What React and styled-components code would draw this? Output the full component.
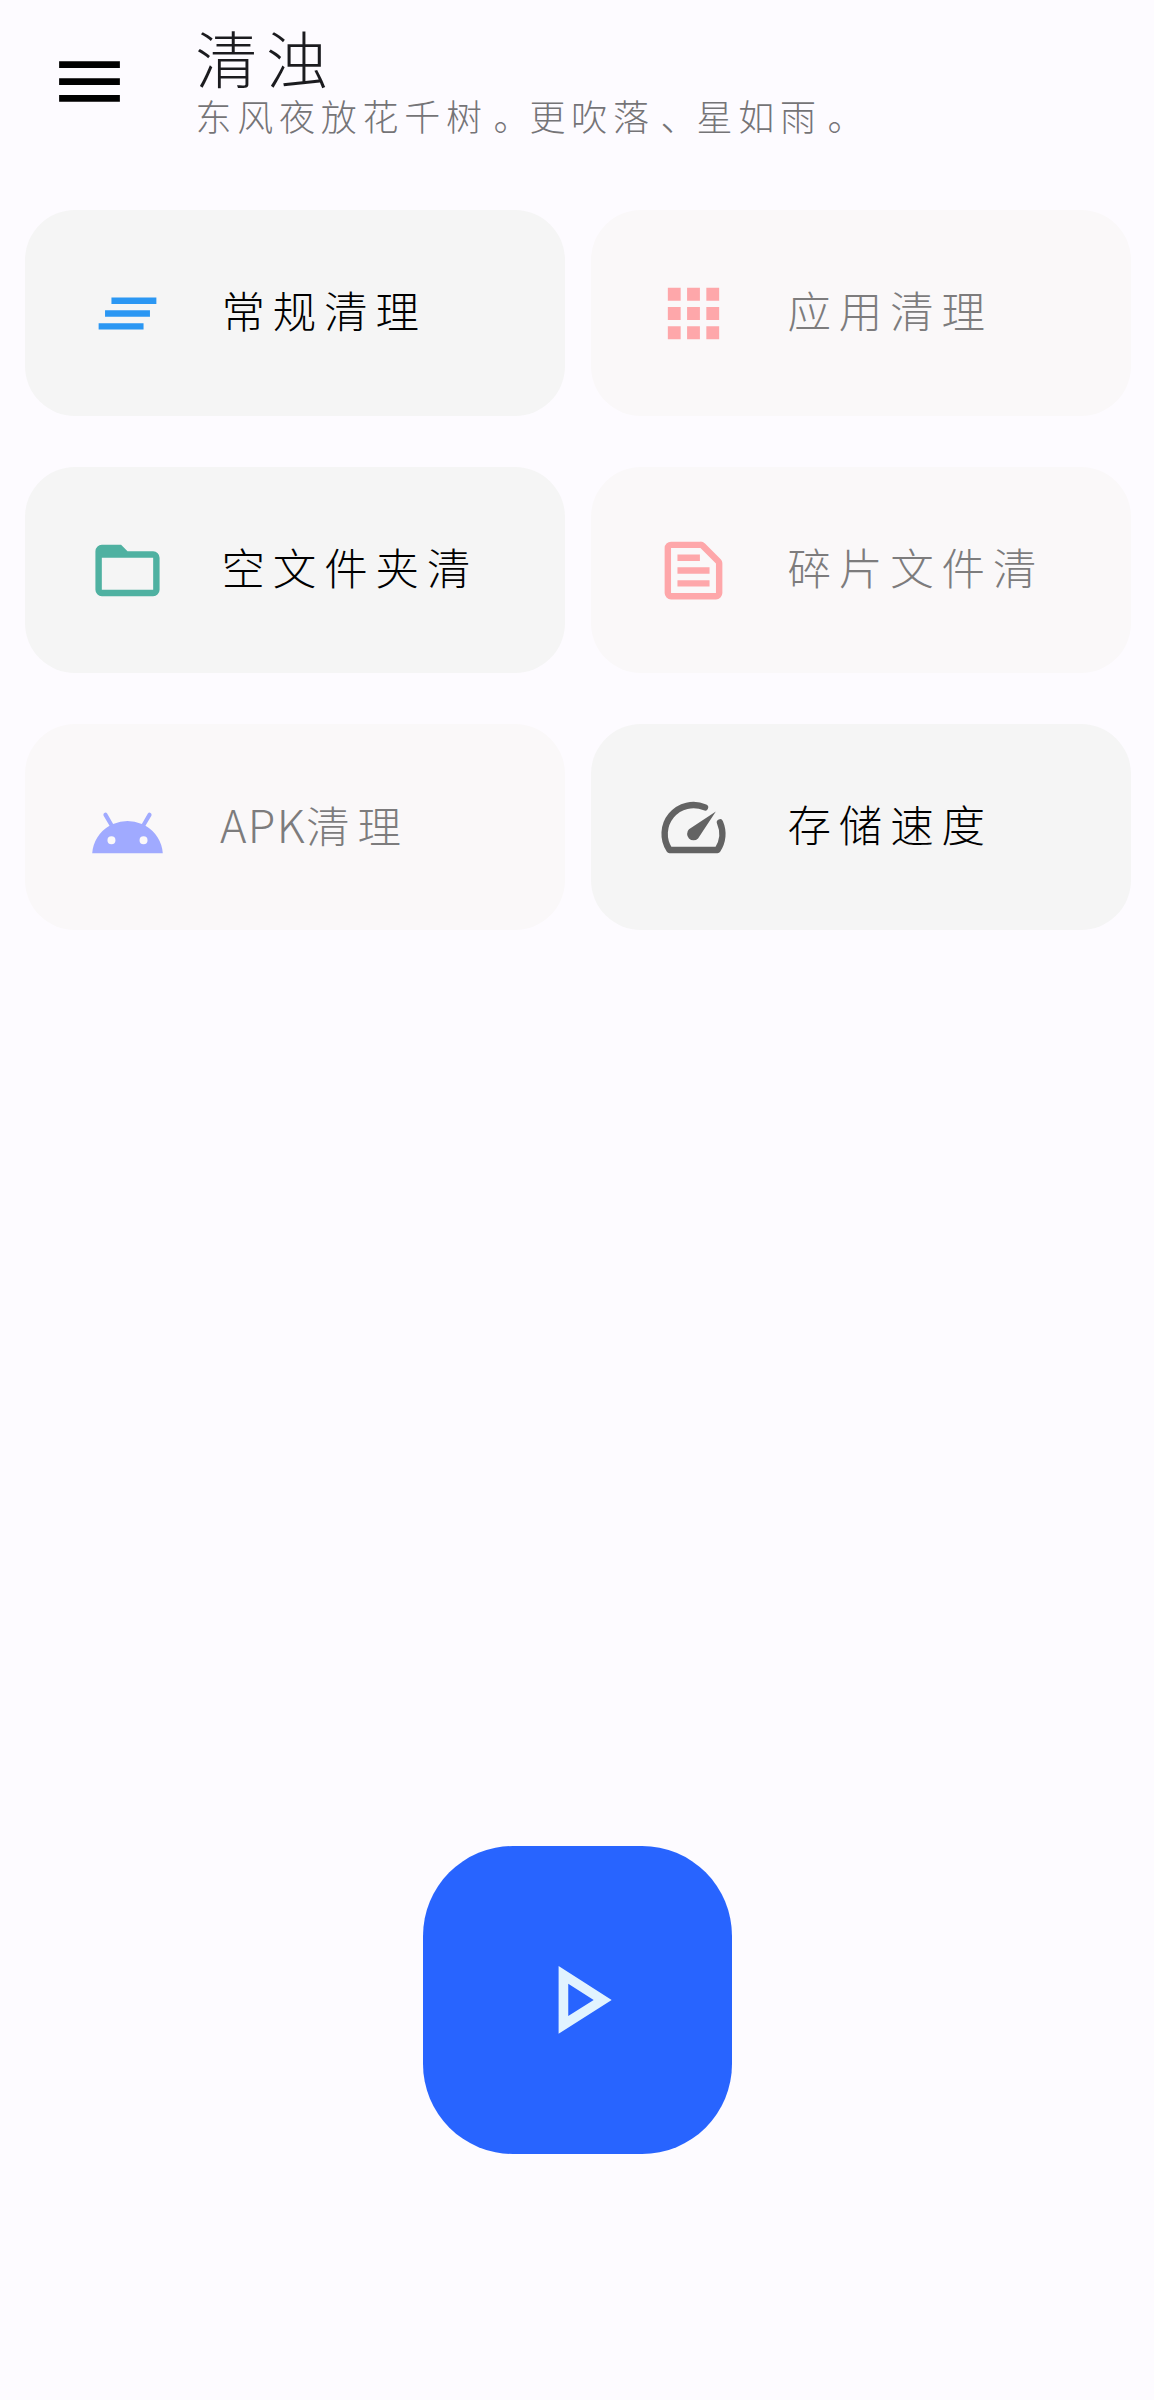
import React from "react";
import styled, { createGlobalStyle } from "styled-components";

const GlobalStyle = createGlobalStyle`
  *, *::before, *::after { box-sizing: border-box; }
  body {
    margin: 0;
    background: #fdfbff;
    font-family: "Liberation Sans", "Noto Sans CJK SC", sans-serif;
    font-weight: 300;
  }
`;

const Screen = styled.main`
  display: flex;
  flex-direction: column;
  width: 1154px;
  height: 2400px;
  overflow: hidden;
  background: #fdfbff;
`;

const Header = styled.header`
  display: flex;
  align-items: flex-start;
  height: 210.4px;
  padding: 26px 49px 0;
`;

const MenuButton = styled.button`
  display: flex;
  flex: none;
  width: 81px;
  height: 81px;
  margin-top: 14.5px;
  padding: 0;
  border: 0;
  background: none;
  color: #000;
`;

const Titles = styled.div`
  display: flex;
  flex-direction: column;
  margin-left: 65.5px;
`;

const Title = styled.h1`
  margin: 3px 0 0;
  font-size: 62px;
  font-weight: 300;
  line-height: 68px;
  letter-spacing: 8.5px;
  color: #1b1b1f;
  white-space: nowrap;
`;

const Subtitle = styled.p`
  margin: 1px 0 0;
  font-size: 36px;
  line-height: 42px;
  letter-spacing: 5.75px;
  color: #757477;
  white-space: nowrap;
`;

const Punctuation = styled.span`
  padding-left: 5.75px;
  letter-spacing: 0;
`;

const Grid = styled.section`
  display: grid;
  grid-template-columns: 540px 540px;
  grid-auto-rows: 205.6px;
  column-gap: 26px;
  row-gap: 51.4px;
  padding-left: 25px;
`;

const Card = styled.button`
  display: flex;
  align-items: center;
  padding: 0 0 0 64.4px;
  border: 0;
  border-radius: 50px;
  background: ${(p) => (p.$dim ? "#faf8f9" : "#f5f5f5")};
  color: ${(p) => (p.$dim ? "#7d7c7d" : "#000")};
  font-family: inherit;
  text-align: left;
`;

const CardIcon = styled.span`
  display: flex;
  flex: none;
  width: 77px;
  height: 77px;
  margin-right: 55px;
  color: ${(p) => p.$color};
`;

const Label = styled.span`
  font-size: 43.5px;
  font-weight: 300;
  line-height: 50px;
  letter-spacing: 7.9px;
  white-space: nowrap;
`;

const Latin = styled.span`
  margin-left: -1.5px;
  font-family: "Noto Sans CJK SC", "Noto Sans", sans-serif;
  font-size: 45px;
  line-height: 1;
  letter-spacing: 1.4px;
`;

const StartButton = styled.button`
  display: flex;
  align-items: center;
  justify-content: center;
  align-self: center;
  width: 308.4px;
  height: 308.4px;
  margin: 915.6px 0 0 1px;
  padding: 0;
  border: 0;
  border-radius: 90px;
  background: #2864ff;
  color: #e1f3ff;
`;

const Svg = styled.svg`
  display: block;
  width: ${(p) => p.$size || "100%"};
  height: ${(p) => p.$size || "100%"};
  fill: currentColor;
`;

const Icon = ({ size, children }) => (
  <Svg viewBox="0 0 24 24" $size={size} aria-hidden="true">
    {children}
  </Svg>
);

const MenuIcon = () => (
  <Icon>
    <path d="M3 18h18v-2H3v2zm0-5h18v-2H3v2zm0-7v2h18V6H3z" />
  </Icon>
);

const ClearAllIcon = () => (
  <Icon>
    <path d="M5 13h14v-2H5v2zm-2 4h14v-2H3v2zM7 7v2h14V7H7z" />
  </Icon>
);

const AppsIcon = () => (
  <Icon>
    <path d="M4 8h4V4H4v4zm6 12h4v-4h-4v4zm-6 0h4v-4H4v4zm0-6h4v-4H4v4zm6 0h4v-4h-4v4zm6-10v4h4V4h-4zm-6 4h4V4h-4v4zm6 6h4v-4h-4v4zm0 6h4v-4h-4v4z" />
  </Icon>
);

const FolderIcon = () => (
  <Icon>
    <path d="M20 18H4V8h16m0-2h-8l-2-2H4a2 2 0 0 0-2 2v12a2 2 0 0 0 2 2h16a2 2 0 0 0 2-2V8a2 2 0 0 0-2-2z" />
  </Icon>
);

const SnippetIcon = () => (
  <Icon>
    <path
      fillRule="evenodd"
      d="M20.41 8.41l-4.83-4.83A2 2 0 0 0 14.17 3H5a2 2 0 0 0-2 2v14a2 2 0 0 0 2 2h14a2 2 0 0 0 2-2V9.83c0-.53-.21-1.04-.59-1.42zM19 19H5V5h9.17L19 9.83V19zM7 7h7v2H7zM7 11h10v2H7zM7 15h10v2H7z"
    />
  </Icon>
);

const AndroidIcon = () => (
  <Icon>
    <path
      transform="translate(0 2)"
      d="M17.6 9.48l1.84-3.18c.16-.31.04-.69-.26-.85a.637.637 0 0 0-.83.22l-1.88 3.24a11.46 11.46 0 0 0-8.94 0L5.65 5.67a.643.643 0 0 0-.87-.2c-.28.18-.37.54-.22.83L6.4 9.48A10.78 10.78 0 0 0 1 18h22a10.78 10.78 0 0 0-5.4-8.52zM7 15.25a1.25 1.25 0 1 1 0-2.5 1.25 1.25 0 0 1 0 2.5zm10 0a1.25 1.25 0 1 1 0-2.5 1.25 1.25 0 0 1 0 2.5z"
    />
  </Icon>
);

const SpeedIcon = () => (
  <Icon>
    <path
      d="M15.58 5.74A9 9 0 0 0 4.52 19H19.48A9 9 0 0 0 20.26 10.42"
      fill="none"
      stroke="currentColor"
      strokeWidth="2"
      strokeLinecap="round"
      strokeLinejoin="round"
    />
    <path d="M10.59 15.41a2 2 0 0 0 2.83 0l5.55-8.43-8.38 5.6a2 2 0 0 0 0 2.83z" />
  </Icon>
);

const PlayIcon = () => (
  <Icon size="115.8px">
    <path d="M10 8.64L15.27 12 10 15.36V8.64M8 5v14l11-7L8 5z" />
  </Icon>
);

const tools = [
  { text: "常规清理", icon: ClearAllIcon, color: "#2b97f3" },
  { text: "应用清理", icon: AppsIcon, color: "#fea7aa", dim: true },
  { text: "空文件夹清", icon: FolderIcon, color: "#4fb1a1" },
  { text: "碎片文件清", icon: SnippetIcon, color: "#fea7aa", dim: true },
  { latin: "APK", text: "清理", icon: AndroidIcon, color: "#a0aaff", dim: true },
  { text: "存储速度", icon: SpeedIcon, color: "#636363" },
];

export default function App() {
  return (
    <>
      <GlobalStyle />
      <Screen>
        <Header>
          <MenuButton aria-label="菜单">
            <MenuIcon />
          </MenuButton>
          <Titles>
            <Title>清浊</Title>
            <Subtitle>
              东风夜放花千树<Punctuation>。</Punctuation>更吹落<Punctuation>、</Punctuation>星如雨
              <Punctuation>。</Punctuation>
            </Subtitle>
          </Titles>
        </Header>
        <Grid>
          {tools.map(({ latin, text, icon: ToolIcon, color, dim }) => (
            <Card key={text + color} $dim={dim}>
              <CardIcon $color={color}>
                <ToolIcon />
              </CardIcon>
              <Label>
                {latin && <Latin>{latin}</Latin>}
                {text}
              </Label>
            </Card>
          ))}
        </Grid>
        <StartButton aria-label="开始">
          <PlayIcon />
        </StartButton>
      </Screen>
    </>
  );
}
